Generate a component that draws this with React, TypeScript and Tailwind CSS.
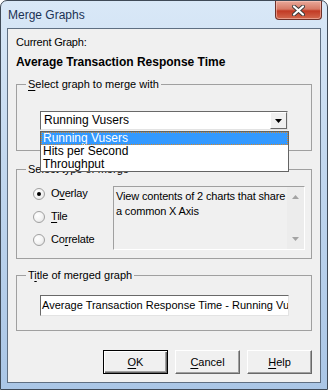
import React from 'react';

const font = "font-['Liberation_Sans',Arial,sans-serif]";

function U({ children }: { children: React.ReactNode }) {
  return <span className="underline underline-offset-[2px]">{children}</span>;
}

function Radio({ checked, label }: { checked?: boolean; label: React.ReactNode }) {
  return (
    <div className="flex h-[23px] items-center gap-[6px]">
      <span className="flex h-[12px] w-[12px] items-center justify-center rounded-full border border-[#a0a0a0] bg-[radial-gradient(circle_at_35%_35%,#ffffff_0%,#f4f4f4_50%,#dcdcdc_100%)]">
        {checked && <span className="h-[4px] w-[4px] rounded-full bg-black" />}
      </span>
      <span className="tracking-[-0.2px]">{label}</span>
    </div>
  );
}

function Button({ children, isDefault }: { children: React.ReactNode; isDefault?: boolean }) {
  return (
    <button
      className={
        'flex h-[24px] w-[65px] items-center justify-center bg-[#f0f0f0] ' +
        (isDefault
          ? 'border border-black shadow-[inset_1px_1px_0_#fff,inset_-1px_-1px_0_#696969,inset_-2px_-2px_0_#a0a0a0]'
          : 'border border-t-white border-l-white border-r-[#696969] border-b-[#696969] shadow-[inset_-1px_-1px_0_#a0a0a0]')
      }
    >
      {children}
    </button>
  );
}

export default function App() {
  const items = ['Running Vusers', 'Hits per Second', 'Throughput'];

  return (
    <div
      className={
        font +
        ' flex h-[390px] w-[328px] flex-col rounded-t-[7px] border border-[#3f4a57] bg-[linear-gradient(180deg,#d9e8f7_0%,#c3d8ef_40%,#aac6e6_100%)] text-[11px] text-black'
      }
    >
      {/* title bar */}
      <div className="flex h-[27px] items-start justify-between pl-[7px] pr-[5px]">
        <div className="mt-[6px] text-[12px] leading-[16px] text-[#1b3254]">Merge Graphs</div>
        <div className="flex h-[19px] w-[47px] items-center justify-center rounded-b-[4px] border border-t-0 border-[#6e3129] bg-[linear-gradient(180deg,#e9a99a_0%,#d77a66_45%,#c23a24_55%,#d2694e_100%)] shadow-[inset_0_0_0_1px_rgba(255,210,200,0.5)]">
          <svg width="13" height="11" viewBox="0 0 13 11">
            <path d="M2 1.5 L11 9.5 M11 1.5 L2 9.5" stroke="#3a3a3a" strokeWidth="4" strokeLinecap="round" />
            <path d="M2 1.5 L11 9.5 M11 1.5 L2 9.5" stroke="#ffffff" strokeWidth="2.2" strokeLinecap="round" />
          </svg>
        </div>
      </div>

      {/* client area */}
      <div className="mx-[6px] flex h-[355px] flex-col border border-[#5f6f82] bg-[#f0f0f0] px-[8px] leading-[13px]">
        <div className="mt-[7px] tracking-[-0.2px]">Current Graph:</div>
        <div className="mt-[7px] text-[12px] font-bold">Average Transaction Response Time</div>

        <fieldset className="mt-[9px] w-[296px] border border-[#a0a0a0] pb-[20px]">
          <legend className="ml-[9px] px-[2px] leading-[13px]">
            <U>S</U>elect graph to merge with
          </legend>
          <div className="relative ml-[23px] mt-[20px] w-[248px] text-[12px]">
            <div className="flex h-[19px] items-center border border-t-[#696969] border-l-[#696969] border-r-[#e3e3e3] border-b-[#e3e3e3] bg-white">
              <span className="ml-[3px] flex-1">Running Vusers</span>
              <span className="flex h-[17px] w-[17px] items-center justify-center border border-t-white border-l-white border-r-[#696969] border-b-[#696969] bg-[#f0f0f0]">
                <svg width="7" height="4" viewBox="0 0 7 4">
                  <path d="M0 0 H7 L3.5 4 Z" fill="#000" />
                </svg>
              </span>
            </div>
            {/* open list */}
            <div className="absolute left-0 top-[20px] z-10 flex w-[249px] flex-col border border-[#646464] bg-white">
              {items.map((it, i) => (
                <div
                  key={it}
                  className={
                    'h-[13px] overflow-hidden pl-[2px] leading-[13px] ' +
                    (i === 0 ? 'bg-[#3399ff] text-white outline outline-1 -outline-offset-1 outline-dotted outline-[#d4882c]' : '')
                  }
                >
                  {it}
                </div>
              ))}
            </div>
          </div>
        </fieldset>

        <fieldset className="mt-[12px] w-[296px] border border-[#a0a0a0] pb-[7px]">
          <legend className="ml-[9px] px-[2px] leading-[13px]">Select type of merge</legend>
          <div className="flex items-start">
            <div className="mt-[6px] flex w-[96px] flex-col pl-[16px]">
              <Radio
                checked
                label={
                  <>
                    O<U>v</U>erlay
                  </>
                }
              />
              <Radio
                label={
                  <>
                    <U>T</U>ile
                  </>
                }
              />
              <Radio
                label={
                  <>
                    Co<U>r</U>relate
                  </>
                }
              />
            </div>
            <div className="mt-[10px] flex h-[64px] w-[192px] border border-t-[#a0a0a0] border-l-[#a0a0a0] border-r-white border-b-white bg-[#f0f0f0]">
              <div className="flex-1 pl-[2px] pt-[2px] leading-[15px] tracking-[-0.15px]">
                View contents of 2 charts that share a common X Axis
              </div>
              <div className="flex w-[17px] flex-col items-center justify-between bg-[#ececec] py-[8px]">
                <svg width="7" height="4" viewBox="0 0 7 4">
                  <path d="M0 4 H7 L3.5 0 Z" fill="#a3a3a3" />
                </svg>
                <svg width="7" height="4" viewBox="0 0 7 4">
                  <path d="M0 0 H7 L3.5 4 Z" fill="#a3a3a3" />
                </svg>
              </div>
            </div>
          </div>
        </fieldset>

        <fieldset className="mt-[10px] w-[296px] border border-[#a0a0a0] pb-[14px]">
          <legend className="ml-[9px] px-[2px] leading-[13px]">
            T<U>i</U>tle of merged graph
          </legend>
          <div className="ml-[23px] mt-[13px] flex h-[21px] w-[249px] items-center overflow-hidden whitespace-nowrap border border-t-[#696969] border-l-[#696969] border-r-[#e3e3e3] border-b-[#e3e3e3] bg-white">
            <span className="pl-[1px]">Average Transaction Response Time - Running Vusers</span>
          </div>
        </fieldset>

        <div className="mt-[19px] flex justify-end gap-[7px]">
          <Button isDefault>
            <U>O</U>K
          </Button>
          <Button>
            <U>C</U>ancel
          </Button>
          <Button>
            <U>H</U>elp
          </Button>
        </div>
      </div>
    </div>
  );
}
